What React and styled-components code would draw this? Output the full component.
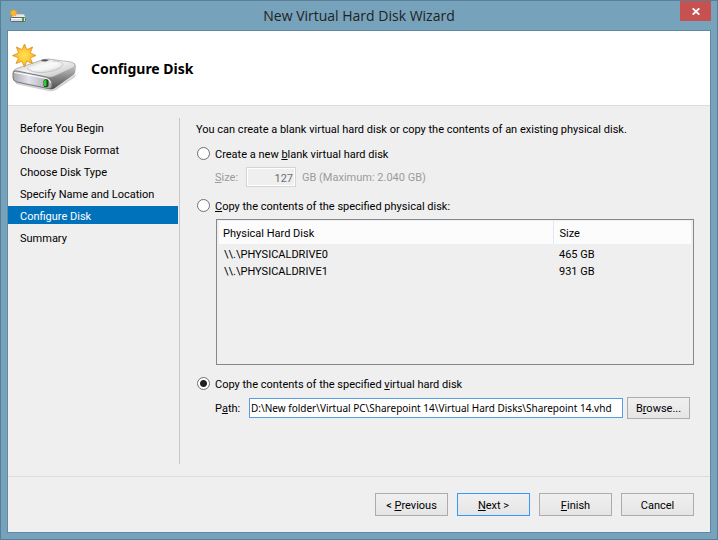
import React, { useState } from "react";
import styled, { createGlobalStyle, css } from "styled-components";

const GlobalStyle = createGlobalStyle`
	* {
		box-sizing: border-box;
	}

	body {
		margin: 0;
		font-family: Roboto, "Noto Sans", sans-serif;
		font-size: 11px;
		line-height: 16px;
		color: #000;
	}

	button, input {
		font: inherit;
		color: inherit;
		margin: 0;
	}
`;

const Window = styled.div`
	display: flex;
	flex-direction: column;
	min-height: 100vh;
	padding: 0 6px 6px;
	border: 1px solid #587f95;
	background-color: #76a2bb;
`;

const TitleBar = styled.header`
	display: grid;
	grid-template-columns: 1fr auto 1fr;
	height: 29px;
`;

const WindowIcon = styled.svg`
	width: 18px;
	height: 16px;
	margin: 7px 0 0 3px;
`;

const WindowTitle = styled.div`
	font-family: "Open Sans", "Noto Sans", sans-serif;
	font-size: 14px;
	line-height: 29px;
	color: #222;
	white-space: nowrap;
`;

const CloseButton = styled.button`
	display: flex;
	align-items: center;
	justify-content: center;
	justify-self: end;
	width: 31px;
	height: 20px;
	padding: 0;
	border: 0;
	background-color: #c75050;
`;

const Client = styled.main`
	display: flex;
	flex-direction: column;
	flex: 1;
	border: 1px solid #6089a0;
	background-color: #efefef;
`;

const Banner = styled.div`
	display: flex;
	align-items: center;
	gap: 14px;
	height: 75px;
	padding: 1px 0 0 3px;
	border-bottom: 1px solid #dcdcdc;
	background-color: #fff;
`;

const DriveIcon = styled.svg`
	width: 66px;
	height: 52px;
`;

const PageTitle = styled.h1`
	margin: 0;
	font-family: "Noto Sans", sans-serif;
	font-size: 14px;
	font-weight: bold;
	line-height: 20px;
`;

const Body = styled.div`
	display: flex;
	flex: 1;
	padding: 12px 16px 12px 0;
`;

const Steps = styled.nav`
	display: flex;
	flex-direction: column;
	gap: 4px;
	width: 172px;
	padding: 0 1px 0 0;
	border-right: 1px solid #c8c8c8;
`;

const Step = styled.a`
	padding: 4px 0 0 12px;
	line-height: 14px;
	color: #000;
	text-decoration: none;

	${(props) =>
		props.$current &&
		css`
			color: #fff;
			background-color: #0072bc;
		`}
`;

const Settings = styled.form`
	display: flex;
	flex-direction: column;
	flex: 1;
	min-width: 0;
	padding: 4px 0 45px 16px;
`;

const Intro = styled.p`
	margin: 0 0 9px;
`;

const Option = styled.section`
	display: flex;
	flex-direction: column;
	flex: ${(props) => (props.$grow ? 1 : "none")};
	gap: 4px;
	margin-bottom: ${(props) => (props.$last ? 0 : "12px")};
`;

const OptionLabel = styled.label`
	display: flex;
	align-items: flex-start;
	gap: 5px;
	padding-left: 1px;
`;

const Radio = styled.input`
	appearance: none;
	width: 13px;
	height: 13px;
	border: 1px solid #707070;
	border-radius: 50%;
	background-color: #fff;

	&:checked {
		background-image: radial-gradient(circle, #212121 3px, transparent 4px);
	}
`;

const FieldRow = styled.div`
	display: flex;
	align-items: center;
	gap: ${(props) => props.$gap};
	padding: 0 4px 0 19px;
	color: ${(props) => (props.$disabled ? "#9b9b9b" : "#000")};
`;

const TextField = styled.input`
	height: 20px;
	border: 1px solid #569de5;
	outline: none;
	background-color: #fff;
`;

const SizeField = styled(TextField)`
	width: 50px;
	padding: 2px 2px 0;
	border-color: #d4d4d4;
	box-shadow: inset 0 0 0 1px #fff;
	background-color: #efefef;
	color: #6d6d6d;
	text-align: right;
`;

const PathField = styled(TextField)`
	flex: 1;
	min-width: 0;
	padding: 0 1px;
	font-family: "Noto Sans", sans-serif;
	font-size: 10px;
`;

const FieldLabel = styled.label`
	width: ${(props) => props.$width};
	padding-top: 2px;
`;

const Unit = styled.span`
	padding-top: 2px;
`;

const Button = styled.button`
	width: ${(props) => (props.$small ? "63px" : "73px")};
	height: ${(props) => (props.$small ? "22px" : "23px")};
	padding: 2px 0 0;
	border: 1px solid ${(props) => (props.$primary ? "#3399ff" : "#acacac")};
	background-image: linear-gradient(#f0f0f0, #e5e5e5);
`;

const ListFrame = styled.div`
	flex: 1;
	margin-left: 20px;
	padding: 1px 2px;
	border: 1px solid #828790;
`;

const DiskTable = styled.table`
	width: 100%;
	border-collapse: collapse;
	table-layout: fixed;
	text-align: left;

	th {
		height: 23px;
		padding: 2px 4px 0;
		font-weight: normal;
		background-color: #fcfcfc;
	}

	th:last-child {
		width: 138px;
		padding-left: 6px;
		border-left: 1px solid #e3e8ee;
	}

	td {
		height: 17px;
		padding: 0 5px;
	}

	td:last-child {
		padding-left: 6px;
	}

	tbody tr:first-child td {
		height: 19px;
		padding-top: 2px;
	}
`;

const Footer = styled.footer`
	display: flex;
	justify-content: flex-end;
	gap: 9px;
	padding: 16px 16px;
	border-top: 1px solid #dcdcdc;
`;

const steps = [
	"Before You Begin",
	"Choose Disk Format",
	"Choose Disk Type",
	"Specify Name and Location",
	"Configure Disk",
	"Summary",
];

const disks = [
	{ name: "\\\\.\\PHYSICALDRIVE0", size: "465 GB" },
	{ name: "\\\\.\\PHYSICALDRIVE1", size: "931 GB" },
];

function DriveArt() {
	return (
		<>
			<defs>
				<linearGradient id="top" x1="0" y1="0" x2="1" y2="1">
					<stop offset="0" stopColor="#b9b9b9" />
					<stop offset="0.45" stopColor="#f4f4f4" />
					<stop offset="1" stopColor="#bcbcbc" />
				</linearGradient>
				<linearGradient id="front" x1="0" y1="0" x2="1" y2="0">
					<stop offset="0" stopColor="#a9a9ad" />
					<stop offset="0.4" stopColor="#e2e2ee" />
					<stop offset="1" stopColor="#a3a3a8" />
				</linearGradient>
				<linearGradient id="side" x1="0" y1="0" x2="0" y2="1">
					<stop offset="0" stopColor="#d2d2d2" />
					<stop offset="0.5" stopColor="#8b8b8b" />
					<stop offset="1" stopColor="#4e4e4e" />
				</linearGradient>
				<radialGradient id="star">
					<stop offset="0" stopColor="#ffe35a" />
					<stop offset="0.6" stopColor="#ffc62f" />
					<stop offset="1" stopColor="#f19a16" />
				</radialGradient>
			</defs>
			<path
				d="M4 38 L40 46 Q43 46 46 44 L65 31 L64 34 L45 47 Q41 49 37 48 L5 41 Z"
				fill="#000"
				opacity="0.18"
			/>
			<path
				d="M37 33 L62 21 Q65 20 65 24 L64 30 Q63 32 61 33 L44 45 Q41 47 38 46 Z"
				fill="url(#side)"
			/>
			<path
				d="M2 29 Q3 26 7 25 L31 17 Q34 16 38 16 L60 19 Q65 20 64 23 L62 25 L44 33 Q40 35 36 34 L5 29 Z"
				fill="url(#top)"
				stroke="#929292"
				strokeWidth="0.6"
			/>
			<path
				d="M16 25 C20 31 38 31 49 25 C56 20 49 18 42 18"
				fill="none"
				stroke="#c2c6c9"
				strokeWidth="1"
			/>
			<path d="M18 25 C24 29 38 28 46 24 C51 20 45 19 34 18 Z" fill="#fff" opacity="0.45" />
			<path d="M30 17 L34 16.2 L38 17 L35 18.4 L31 18.2 Z" fill="#555" />
			<path
				d="M2 30 Q2 27 6 28 L35 34 Q40 35 41 39 L41 43 Q41 46 37 45.5 L6 39 Q2 38 2 35 Z"
				fill="url(#front)"
				stroke="#6d6d70"
				strokeWidth="0.9"
			/>
			<path d="M3.4 29.5 L35 35.4 Q39 36.5 39.6 40" fill="none" stroke="#fff" strokeWidth="1" />
			<rect x="32.5" y="36.2" width="5" height="8" rx="2" fill="#14501a" />
			<rect x="33" y="37" width="2.4" height="6.2" rx="1.2" fill="#35cf35" />
			<path
				d="M13.5 1 L15.8 6.6 L21.6 4 L19.3 9.9 L25 12.6 L19.3 14.8 L21.5 20.5 L15.8 18.2 L13.5 24 L11 18.2 L5 20.5 L7.6 14.8 L1.5 12.6 L7.6 9.9 L5.4 4 L11 6.6 Z"
				fill="url(#star)"
				stroke="#dd9322"
				strokeWidth="0.8"
				strokeLinejoin="round"
			/>
		</>
	);
}

function SmallDriveArt() {
	return (
		<>
			<path d="M3 6 L14 6 L16 10 L1 10 Z" fill="#e9e9e9" stroke="#969ba0" strokeWidth="0.6" />
			<rect x="0.5" y="9.5" width="15" height="4" rx="1" fill="#dedee2" stroke="#62686d" />
			<path d="M1.5 10.5 H11" stroke="#fff" />
			<rect x="12" y="10" width="2" height="3" fill="#23b32b" />
			<path
				d="M3.5 1 L4.5 3 L6.5 2.4 L5.8 4.4 L7.5 5 L5.6 5.8 L6 8 L4 7.2 L3 8.5 L2.2 6.7 L0 6.9 L1.2 5 L0 3.2 L2.3 3.2 Z"
				fill="#ffba2b"
				stroke="#ec9a1d"
				strokeWidth="0.5"
			/>
		</>
	);
}

export default function App() {
	const [source, setSource] = useState("virtual");
	const [path, setPath] = useState(
		"D:\\New folder\\Virtual PC\\Sharepoint 14\\Virtual Hard Disks\\Sharepoint 14.vhd"
	);

	const radioProps = (value) => ({
		type: "radio",
		name: "source",
		value,
		checked: source === value,
		onChange: () => setSource(value),
	});

	return (
		<>
			<GlobalStyle />
			<Window>
				<TitleBar>
					<WindowIcon viewBox="0 0 18 16" aria-hidden="true">
						<SmallDriveArt />
					</WindowIcon>
					<WindowTitle>New Virtual Hard Disk Wizard</WindowTitle>
					<CloseButton type="button" aria-label="Close">
						<svg width="8" height="7" viewBox="0 0 8 7" aria-hidden="true">
							<path d="M0.7 0.3 L7.3 6.7 M7.3 0.3 L0.7 6.7" stroke="#fff" strokeWidth="1.8" />
						</svg>
					</CloseButton>
				</TitleBar>
				<Client>
					<Banner>
						<DriveIcon viewBox="0 0 66 52" aria-hidden="true">
							<DriveArt />
						</DriveIcon>
						<PageTitle>Configure Disk</PageTitle>
					</Banner>
					<Body>
						<Steps>
							{steps.map((step) => (
								<Step
									key={step}
									href="#"
									$current={step === "Configure Disk"}
									aria-current={step === "Configure Disk" ? "step" : undefined}>
									{step}
								</Step>
							))}
						</Steps>
						<Settings id="settings">
							<Intro>
								You can create a blank virtual hard disk or copy the contents of an
								existing physical disk.
							</Intro>
							<Option>
								<OptionLabel>
									<Radio {...radioProps("blank")} />
									<span>
										Create a new <u>b</u>lank virtual hard disk
									</span>
								</OptionLabel>
								<FieldRow $gap="6px" $disabled>
									<FieldLabel htmlFor="size" $width="25px">
										<u>S</u>ize:
									</FieldLabel>
									<SizeField id="size" defaultValue="127" disabled />
									<Unit>GB (Maximum: 2.040 GB)</Unit>
								</FieldRow>
							</Option>
							<Option $grow>
								<OptionLabel>
									<Radio {...radioProps("physical")} />
									<span>
										<u>C</u>opy the contents of the specified physical disk:
									</span>
								</OptionLabel>
								<ListFrame>
									<DiskTable>
										<thead>
											<tr>
												<th>Physical Hard Disk</th>
												<th>Size</th>
											</tr>
										</thead>
										<tbody>
											{disks.map((disk) => (
												<tr key={disk.name}>
													<td>{disk.name}</td>
													<td>{disk.size}</td>
												</tr>
											))}
										</tbody>
									</DiskTable>
								</ListFrame>
							</Option>
							<Option $last>
								<OptionLabel>
									<Radio {...radioProps("virtual")} />
									<span>
										Copy the contents of the specified <u>v</u>irtual hard disk
									</span>
								</OptionLabel>
								<FieldRow $gap="4px">
									<FieldLabel htmlFor="path" $width="30px">
										P<u>a</u>th:
									</FieldLabel>
									<PathField
										id="path"
										value={path}
										onChange={(e) => setPath(e.target.value)}
									/>
									<Button type="button" $small>
										B<u>r</u>owse...
									</Button>
								</FieldRow>
							</Option>
						</Settings>
					</Body>
					<Footer>
						<Button type="button">
							&lt; <u>P</u>revious
						</Button>
						<Button type="submit" form="settings" $primary>
							<u>N</u>ext &gt;
						</Button>
						<Button type="button">
							<u>F</u>inish
						</Button>
						<Button type="button">Cancel</Button>
					</Footer>
				</Client>
			</Window>
		</>
	);
}
